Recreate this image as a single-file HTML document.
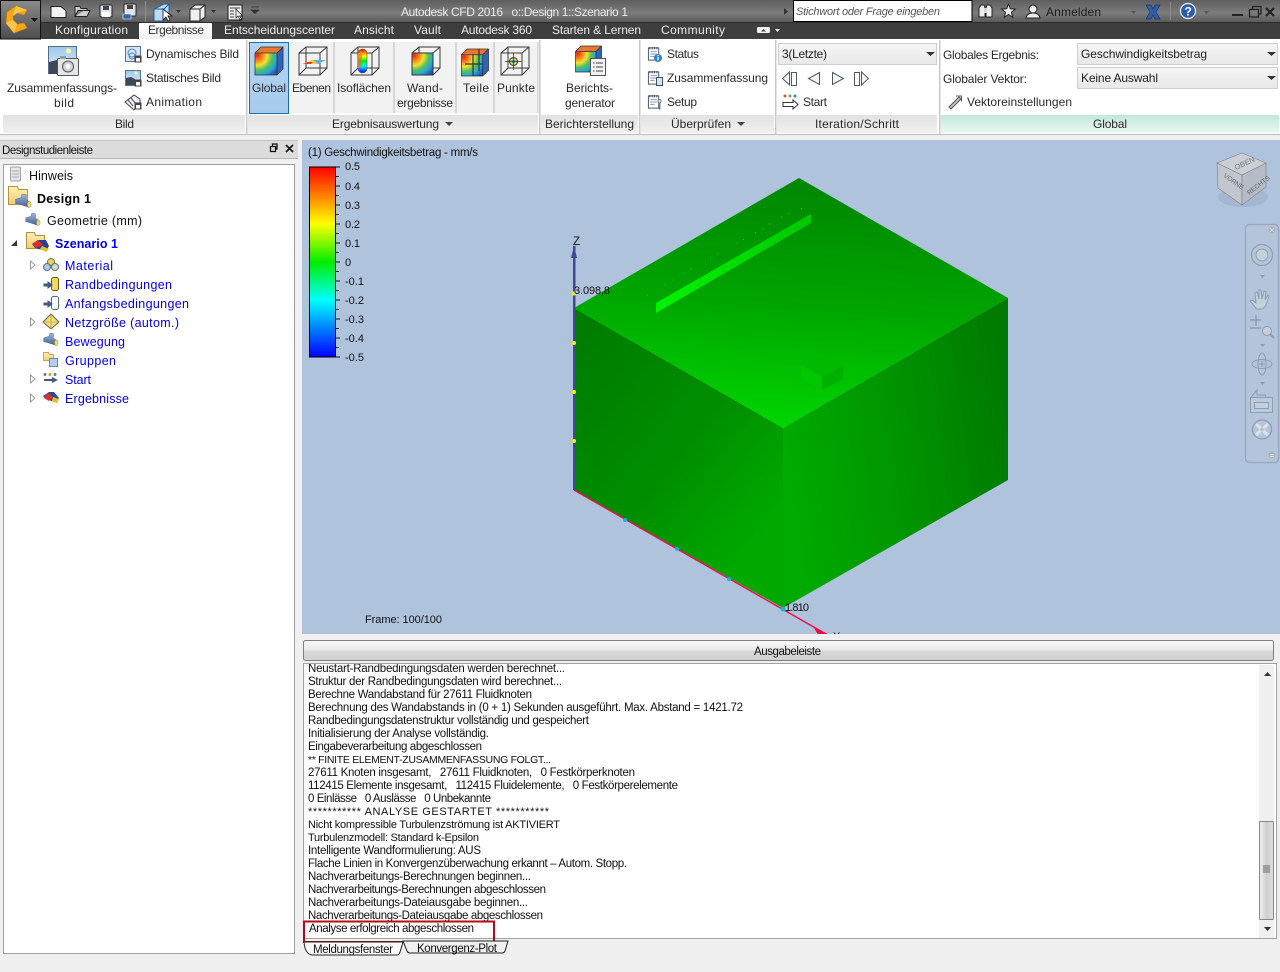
<!DOCTYPE html>
<html><head><meta charset="utf-8"><title>Autodesk CFD 2016</title>
<style>
html,body{margin:0;padding:0;width:1280px;height:972px;overflow:hidden;background:#f0f0f0}
svg{display:block;font-family:"Liberation Sans",sans-serif;font-size:12px}
text{white-space:pre}
</style></head><body>
<svg xmlns="http://www.w3.org/2000/svg" width="1280" height="972" viewBox="0 0 1280 972">
<defs>
<linearGradient id="tb" x1="0" y1="0" x2="0" y2="1"><stop offset="0" stop-color="#5e5e5e"/><stop offset=".55" stop-color="#7c7c7c"/><stop offset="1" stop-color="#585858"/></linearGradient>
<linearGradient id="app" x1="0" y1="0" x2="0" y2="1"><stop offset="0" stop-color="#8a8a8a"/><stop offset=".5" stop-color="#6d6d6d"/><stop offset="1" stop-color="#4c4c4c"/></linearGradient>
<linearGradient id="lab" x1="0" y1="0" x2="0" y2="1"><stop offset="0" stop-color="#e2e2e2"/><stop offset="1" stop-color="#f0f0f0"/></linearGradient>
<linearGradient id="labg" x1="0" y1="0" x2="0" y2="1"><stop offset="0" stop-color="#c4e6da"/><stop offset="1" stop-color="#e8f8f3"/></linearGradient>
<linearGradient id="sel" x1="0" y1="0" x2="0" y2="1"><stop offset="0" stop-color="#b4d4f2"/><stop offset="1" stop-color="#a6cbec"/></linearGradient>
<linearGradient id="tab" x1="0" y1="0" x2="0" y2="1"><stop offset="0" stop-color="#ffffff"/><stop offset="1" stop-color="#f0f0f0"/></linearGradient>
<linearGradient id="combo" x1="0" y1="0" x2="0" y2="1"><stop offset="0" stop-color="#f6f6f6"/><stop offset="1" stop-color="#e8e8e8"/></linearGradient>
<linearGradient id="btn" x1="0" y1="0" x2="0" y2="1"><stop offset="0" stop-color="#fafafa"/><stop offset=".45" stop-color="#eaeaea"/><stop offset=".55" stop-color="#d8d8d8"/><stop offset="1" stop-color="#d0d0d0"/></linearGradient>
<linearGradient id="thumb" x1="0" y1="0" x2="1" y2="0"><stop offset="0" stop-color="#f0f0f0"/><stop offset=".5" stop-color="#cfcfcf"/><stop offset="1" stop-color="#dedede"/></linearGradient>
<linearGradient id="leg" x1="0" y1="0" x2="0" y2="1"><stop offset="0" stop-color="#ff0000"/><stop offset=".3" stop-color="#ffff00"/><stop offset=".5" stop-color="#00ee00"/><stop offset=".7" stop-color="#00ffff"/><stop offset="1" stop-color="#0000ff"/></linearGradient>
<linearGradient id="gtop" gradientUnits="userSpaceOnUse" x1="799" y1="178" x2="783" y2="428"><stop offset="0" stop-color="#008600"/><stop offset=".5" stop-color="#00a400"/><stop offset="1" stop-color="#00d600"/></linearGradient>
<linearGradient id="gleft" gradientUnits="userSpaceOnUse" x1="574" y1="340" x2="783" y2="500"><stop offset="0" stop-color="#007c00"/><stop offset=".6" stop-color="#008f00"/><stop offset="1" stop-color="#00a800"/></linearGradient>
<linearGradient id="gright" gradientUnits="userSpaceOnUse" x1="783" y1="430" x2="1008" y2="400"><stop offset="0" stop-color="#00aa00"/><stop offset=".5" stop-color="#009400"/><stop offset="1" stop-color="#007a00"/></linearGradient>
<linearGradient id="strip" gradientUnits="userSpaceOnUse" x1="656" y1="0" x2="811" y2="0"><stop offset="0" stop-color="#00f400"/><stop offset="1" stop-color="#00c800"/></linearGradient>
<radialGradient id="heat" cx=".1" cy=".1" r="1.150"><stop offset="0" stop-color="#e8241c"/><stop offset=".22" stop-color="#f58a1e"/><stop offset=".4" stop-color="#f4e030"/><stop offset=".6" stop-color="#50c060"/><stop offset=".78" stop-color="#28a8d8"/><stop offset="1" stop-color="#2850b0"/></radialGradient>
<linearGradient id="sky" x1="0" y1="0" x2="0" y2="1"><stop offset="0" stop-color="#9cc8f0"/><stop offset="1" stop-color="#e4f0fa"/></linearGradient>
<linearGradient id="fold" x1="0" y1="0" x2="0" y2="1"><stop offset="0" stop-color="#fff2b8"/><stop offset="1" stop-color="#f0cc70"/></linearGradient>
<linearGradient id="pipe" x1="0" y1="0" x2="0" y2="1"><stop offset="0" stop-color="#9db8e0"/><stop offset="1" stop-color="#45608f"/></linearGradient>
<clipPath id="logclip"><rect x="304" y="664" width="950" height="275"/></clipPath>
<clipPath id="vpclip"><rect x="302" y="140" width="978" height="494"/></clipPath>
<symbol id="hc" viewBox="0 0 28 28" overflow="visible">
<path d="M0 6 22 6 22 28 0 28Z" fill="url(#heat)"/>
<path d="M0 6 6 0 28 0 22 6Z" fill="#e87830"/>
<path d="M22 6 28 0 28 22 22 28Z" fill="#2f62bc"/>
<path d="M0 6 6 0 28 0 28 22 22 28 0 28Z M0 6 22 6 22 28 M22 6 28 0" fill="none" stroke="#333" stroke-width=".8"/>
</symbol>
<symbol id="wc" viewBox="0 0 28 28" overflow="visible">
<path d="M0 6 7 0 28 0 28 21 21 28 0 28Z M0 6 21 6 21 28 M21 6 28 0 M7 0 7 21 0 28 M7 21 28 21" fill="none" stroke="#3a3a3a" stroke-width="1"/>
</symbol>
<symbol id="doc" viewBox="0 0 16 16" overflow="visible">
<rect x="1.500" y="1.500" width="11" height="13" fill="#fff" stroke="#40506a"/>
<path d="M3 0.500V3M5.500 .5V3M8 .5V3M10.500 .5V3" stroke="#40506a"/>
<path d="M3.500 5.500H10.500M3.500 8H10.500M3.500 10.500H8" stroke="#8a94a4"/>
</symbol>
<symbol id="pipeic" viewBox="0 0 18 16" overflow="visible">
<path d="M0 6 7 4 V1 Q9.500 -.5 12 1 V6.500 L17 9.500 L15 15 L2 11 L0 11Z" fill="url(#pipe)" stroke="#51678c" stroke-width=".6"/>
<ellipse cx="15.500" cy="12" rx="2.200" ry="3.500" fill="#f4d66a" stroke="#8c7a30" stroke-width=".5"/>
</symbol>
</defs>

<!-- title bar -->
<rect width="1280" height="23" fill="url(#tb)"/>
<rect y="22" width="1280" height="1" fill="#2c2c2c"/>
<rect y="23" width="1280" height="17" fill="#3e3e3e"/>
<!-- ribbon -->
<rect y="39" width="1280" height="96" fill="#fff"/>
<rect y="135" width="1280" height="5" fill="#efefef"/>
<rect y="134" width="1280" height="1" fill="#bdbdbd"/>

<!-- app button -->
<rect x=".5" y=".5" width="40" height="38.500" fill="url(#app)" stroke="#111"/>
<path d="M27 10 16 6 7 12 6 23 14 33 27 28 24 23 17 24 13 20 13 16 17 13 24 15Z" fill="#f2a71c" stroke="#cf7f10" stroke-width=".6"/>
<path d="M16 6 13 16 17 13 27 10Z M6 23 13 20 17 24 14 33Z" fill="#fbc84a"/>
<path d="M31 18h7l-3.500 4z" fill="#111"/>

<!-- QAT icons -->
<path d="M51 6.500h10l5 4.500v6.500h-15z" fill="#f4f4f4" stroke="#222"/>
<path d="M75 16.500v-10h5l1 2h6v2h-9l-3 6h12l3-6h-6" fill="#cfcfcf" stroke="#222"/>
<rect x="100" y="5" width="12" height="12" rx="1" fill="#dfe4ec" stroke="#222"/><rect x="103" y="6" width="6" height="4" fill="#444"/><rect x="102" y="12" width="8" height="5" fill="#fff"/>
<rect x="124" y="4" width="12" height="12" rx="1" fill="#dfe4ec" stroke="#222"/><rect x="127" y="5" width="6" height="4" fill="#444"/><path d="M123 14h8v5h-8z" fill="#2f64a8" stroke="#fff" stroke-width=".6"/>
<rect x="145" y="1" width="1" height="21" fill="#8e8e8e"/>
<path d="M154 9l10-5h5v12l-6 5h-9z" fill="#bcdcf4" stroke="#245ea0" stroke-width="1"/><path d="M154 9h10l5-5M164 9v12" fill="none" stroke="#245ea0"/>
<path d="M163 9l0 11 3-3 2 4 2-1-2-4h4z" fill="#fff" stroke="#111" stroke-width=".8"/>
<path d="M176 10h5l-2.500 3z" fill="#333"/>
<path d="M190 9l5-4h10v12l-5 4h-10z" fill="#f0f0f0" stroke="#222"/><path d="M190 9h10l5-4M200 9v12" fill="none" stroke="#222"/>
<path d="M211 10h5l-2.500 3z" fill="#333"/>
<rect x="228" y="5" width="14" height="15" fill="#ececec" stroke="#222"/><path d="M230 8h10M230 11h4M230 14h4M230 17h4" stroke="#444"/>
<path d="M236 9v9l2-2 2 4 1.500-1-2-3h3z" fill="#fff" stroke="#111" stroke-width=".7"/>
<path d="M251 7h8M251 10h8l-4 3.500z" fill="#333" stroke="#333" stroke-width=".7"/>

<!-- title -->
<text x="401" y="16" textLength="227" fill="#ececec">Autodesk CFD 2016   o::Design 1::Szenario 1</text>
<path d="M784 8v7l4-3.500z" fill="#333"/>
<rect x="793.500" y=".5" width="178.500" height="21" fill="#fff" stroke="#000"/>
<text x="796" y="15" textLength="144" font-size="11" font-style="italic" fill="#555">Stichwort oder Frage eingeben</text>
<!-- binoculars -->
<path d="M979 8l2-3h3l1 3v9h-6z M986 8l1-3h3l2 3v9h-6z" fill="#eee" stroke="#222"/><rect x="984.500" y="8" width="2" height="5" fill="#ccc"/>
<path d="M1008.500 4l1.800 4.800 5 .3-3.900 3.200 1.300 5-4.200-2.800-4.200 2.800 1.300-5-3.900-3.200 5-.3z" fill="#eee" stroke="#222"/>
<circle cx="1033" cy="9" r="4" fill="#eee" stroke="#222"/><path d="M1026 18q1-5 7-5t7 5z" fill="#eee" stroke="#222"/>
<text x="1046" y="16" textLength="55" fill="#1c1c1c">Anmelden</text>
<path d="M1131 11h5l-2.500 3z" fill="#555"/>
<path d="M1146 5h5l2 4 2-4h5l-4 7 4 7h-5l-2-4-2 4h-5l4-7z" fill="#2f5ea8" stroke="#15356c" stroke-width=".7"/>
<rect x="1170" y="2" width="1" height="18" fill="#8a8a8a"/>
<circle cx="1188" cy="11" r="7.500" fill="#2a5cb0" stroke="#eee" stroke-width="1.200"/><text x="1184.500" y="15.500" font-size="12" font-weight="bold" fill="#fff">?</text>
<path d="M1204 11h5l-2.500 3z" fill="#555"/>
<rect x="1232" y="14" width="11" height="2" fill="#222"/>
<path d="M1249.500 9.500h9v7.500h-9z M1252.500 9.500v-3h8.500v7.500h-2.500" fill="none" stroke="#222" stroke-width="1.300"/>
<path d="M1266 8l8 8M1274 8l-8 8" stroke="#222" stroke-width="2.200"/>

<!-- menu tabs -->
<path d="M139 39v-15q0-1 1-1h71q1 0 1 1v15z" fill="url(#tab)"/>
<g fill="#ededed">
<text x="55" y="34" textLength="73">Konfiguration</text>
<text x="148" y="34" textLength="56" fill="#303030">Ergebnisse</text>
<text x="224" y="34" textLength="111">Entscheidungscenter</text>
<text x="354" y="34" textLength="40">Ansicht</text>
<text x="414" y="34" textLength="27">Vault</text>
<text x="461" y="34" textLength="71">Autodesk 360</text>
<text x="552" y="34" textLength="89">Starten &amp; Lernen</text>
<text x="661" y="34" textLength="64">Community</text>
</g>
<rect x="757" y="27" width="13" height="6" rx="1.500" fill="#f0f0f0"/><path d="M761 31.500h5l-2.500-2.500z" fill="#444"/>
<path d="M775 29h5l-2.500 3z" fill="#eee"/>

<!-- panel labels -->
<rect x="3" y="115" width="242" height="18" fill="url(#lab)"/>
<rect x="248" y="115" width="290" height="18" fill="url(#lab)"/>
<rect x="541" y="115" width="97" height="18" fill="url(#lab)"/>
<rect x="641" y="115" width="133" height="18" fill="url(#lab)"/>
<rect x="777" y="115" width="160" height="18" fill="url(#lab)"/>
<rect x="941" y="115" width="338" height="18" fill="url(#labg)"/>
<g fill="#c9c9c9">
<rect x="246" y="40" width="1.500" height="94"/><rect x="539" y="40" width="1.500" height="94"/><rect x="639" y="40" width="1.500" height="94"/><rect x="775" y="40" width="1.500" height="94"/><rect x="939" y="40" width="1.500" height="94"/>
</g>
<!-- Ergebnisauswertung buttons -->
<rect x="290" y="42" width="43" height="71" fill="#f2f2f2"/><rect x="335" y="42" width="58" height="71" fill="#f2f2f2"/><rect x="395" y="42" width="60" height="71" fill="#f2f2f2"/><rect x="457" y="42" width="36" height="71" fill="#f2f2f2"/><rect x="495" y="42" width="42" height="71" fill="#f2f2f2"/>
<g fill="#d6d6d6"><rect x="333" y="42" width="2" height="71"/><rect x="393" y="42" width="2" height="71"/><rect x="455" y="42" width="2" height="71"/><rect x="493" y="42" width="2" height="71"/><rect x="537" y="42" width="1.500" height="71"/></g>
<rect x="249.500" y="42.500" width="39" height="71" fill="url(#sel)" stroke="#1b6db5"/>

<!-- Ribbon text -->
<g fill="#2a2a2a">
<text x="7" y="92" textLength="110">Zusammenfassungs-</text>
<text x="54" y="107" textLength="20">bild</text>
<text x="146" y="58" textLength="93">Dynamisches Bild</text>
<text x="146" y="82" textLength="75">Statisches Bild</text>
<text x="146" y="106" textLength="56">Animation</text>
<text x="115" y="128" textLength="19">Bild</text>
<text x="252" y="92" textLength="34">Global</text>
<text x="292" y="92" textLength="39">Ebenen</text>
<text x="337" y="92" textLength="54">Isoflächen</text>
<text x="407" y="92" textLength="36">Wand-</text>
<text x="397" y="107" textLength="56">ergebnisse</text>
<text x="463" y="92" textLength="26">Teile</text>
<text x="497" y="92" textLength="38">Punkte</text>
<text x="332" y="128" textLength="107">Ergebnisauswertung</text>
<text x="566" y="92" textLength="47">Berichts-</text>
<text x="565" y="107" textLength="50">generator</text>
<text x="545" y="128" textLength="89">Berichterstellung</text>
<text x="667" y="58" textLength="32">Status</text>
<text x="667" y="82" textLength="101">Zusammenfassung</text>
<text x="667" y="106" textLength="30">Setup</text>
<text x="671" y="128" textLength="60">Überprüfen</text>
<text x="803" y="106" textLength="24">Start</text>
<text x="815" y="128" textLength="84">Iteration/Schritt</text>
<text x="943" y="59" textLength="96">Globales Ergebnis:</text>
<text x="943" y="83" textLength="84">Globaler Vektor:</text>
<text x="967" y="106" textLength="105">Vektoreinstellungen</text>
<text x="1093" y="128" textLength="34">Global</text>
</g>
<path d="M445 122h8l-4 4zM737 122h8l-4 4z" fill="#444"/>

<!-- combos -->
<rect x="778.500" y="43.500" width="158" height="21" fill="url(#combo)" stroke="#cfcfcf"/>
<rect x="1077.500" y="43.500" width="200" height="21" fill="url(#combo)" stroke="#cfcfcf"/>
<rect x="1077.500" y="67.500" width="200" height="21" fill="url(#combo)" stroke="#cfcfcf"/>
<text x="782" y="58" textLength="45" fill="#222">3(Letzte)</text>
<text x="1081" y="58" textLength="126" fill="#222">Geschwindigkeitsbetrag</text>
<text x="1081" y="82" textLength="77" fill="#222">Keine Auswahl</text>
<path d="M926 52h9l-4.500 4zM1267 52h9l-4.500 4zM1267 76h9l-4.500 4z" fill="#333"/>

<!-- Ribbon icons -->
<rect x="48.500" y="46.500" width="28" height="27" fill="url(#sky)" stroke="#5a6d80"/>
<path d="M49 74v-12l8-2 6 3v11z" fill="#3f4658"/>
<circle cx="68.500" cy="51" r="2.500" fill="#fff6a0"/>
<rect x="57.500" y="58.500" width="21" height="17" rx="1" fill="#e4e6e8" stroke="#555"/><circle cx="68" cy="66.500" r="5.500" fill="#cfd4d8" stroke="#555"/><circle cx="68" cy="66.500" r="2.500" fill="#f6f6f6"/>
<rect x="60" y="56" width="6" height="3" fill="#9a9a9a"/>
<rect x="125.500" y="46.500" width="15" height="15" fill="#d8e6f4" stroke="#5b7590"/><circle cx="132" cy="53" r="4" fill="none" stroke="#4d8bc4"/><circle cx="132" cy="56" r="3" fill="none" stroke="#4d8bc4"/>
<rect x="134.500" y="55.500" width="7" height="7" fill="#444"/><rect x="136" y="58" width="4" height="3.500" fill="#fff"/>
<rect x="125.500" y="70.500" width="15" height="15" fill="url(#sky)" stroke="#5b7590"/><path d="M126 85v-7l5-1 4 2v6z" fill="#3f4658"/><circle cx="136" cy="73" r="1.500" fill="#fff6a0"/>
<rect x="134.500" y="79.500" width="7" height="7" fill="#444"/><rect x="136" y="82" width="4" height="3.500" fill="#fff"/>
<path d="M125 102l9-7 6 4v5l-6 6z" fill="#eef0f4" stroke="#444"/><path d="M128 100l5 6M131 98l5 6" stroke="#555"/>
<rect x="134.500" y="102.500" width="7" height="7" fill="#444"/><rect x="136" y="105" width="4" height="3.500" fill="#fff"/>

<use href="#hc" x="255" y="47" width="28" height="28"/>
<use href="#wc" x="299" y="47" width="28" height="28"/>
<path d="M303 64l9-4h14l-8 4z" fill="#f6d040"/><path d="M303 64l5-2h5l-2 2z" fill="#e84020"/><path d="M318 64l-5-4h13z" fill="#58b0e8"/>
<use href="#wc" x="351" y="47" width="28" height="28"/>
<rect x="358" y="49" width="9" height="24" rx="4.500" fill="url(#leg)" stroke="#555" stroke-width=".6"/>
<rect x="358" y="54" width="4" height="14" fill="#e8741c" opacity=".7"/>
<use href="#wc" x="412" y="47" width="28" height="28"/>
<rect x="412" y="53" width="21" height="22" fill="url(#heat)"/>
<rect x="412" y="53" width="21" height="22" fill="none" stroke="#333"/>
<use href="#hc" x="461" y="49" width="28" height="27"/>
<path d="M465 64h18M473 54v22M479 49v22" stroke="#333" stroke-width="1.200" fill="none"/>
<use href="#wc" x="501" y="47" width="28" height="28"/>
<circle cx="513.500" cy="61.500" r="4" fill="#f6d040" stroke="#333"/><circle cx="513.500" cy="61.500" r="1.800" fill="#28a0d8"/><path d="M513.500 53v17M505 61.500h17" stroke="#333" stroke-width=".8"/>
<use href="#hc" x="575" y="46" width="27" height="26"/>
<rect x="590.500" y="58.500" width="15" height="17" fill="#f2f2f2" stroke="#555"/>
<path d="M593 63h1.500M596 63h7M593 67h1.500M596 67h7M593 71h1.500M596 71h7" stroke="#444"/>

<use href="#doc" x="647" y="46" width="15" height="16"/><circle cx="658" cy="58" r="4" fill="#2f80d8"/><rect x="657.400" y="56.800" width="1.300" height="3.500" fill="#fff"/><rect x="657.400" y="55" width="1.300" height="1" fill="#fff"/>
<use href="#doc" x="647" y="70" width="15" height="16"/><rect x="656.500" y="77.500" width="6" height="8" fill="#d8e4f0" stroke="#40506a"/>
<use href="#doc" x="647" y="94" width="15" height="16"/><path d="M658 100a2 2 0 0 1 3 0v2l-1 1v6h-1v-6l-1-1z" fill="#dfe4ec" stroke="#40506a" stroke-width=".7"/>

<!-- iteration controls -->
<g fill="#f6f6f6" stroke="#4c5966">
<path d="M789.500 72v13l-7-6.500z"/><rect x="791.500" y="72.500" width="5" height="13" fill="#fff"/>
<path d="M819.500 72.500v12l-11-6z"/>
<path d="M832.500 72.500v12l11-6z"/>
<rect x="854.500" y="72.500" width="5" height="13" fill="#fff"/><path d="M861.500 72v13l7-6.500z"/>
</g>
<circle cx="785" cy="96" r="1.500" fill="#c65a4a"/><circle cx="790" cy="96" r="1.500" fill="#6aa860"/><circle cx="795" cy="96" r="1.500" fill="#4a7ec6"/>
<path d="M783 102.500h10v-2.500l5 4.500-5 4.500v-2.500h-10z" fill="#fff" stroke="#333"/>
<path d="M949 107l10-10 2 2-10 10z" fill="#c0c4ca" stroke="#555"/><path d="M956 96h5.500v5.500" fill="none" stroke="#555"/>

<!-- left panel -->
<rect x="0" y="140" width="298" height="18" fill="#dcdcdc"/><rect x="0" y="140" width="298" height="1" fill="#c2c2c2"/><rect x="0" y="158" width="298" height="1" fill="#b8b8b8"/>
<text x="2" y="154" textLength="91" font-size="11.500" fill="#111">Designstudienleiste</text>
<path d="M270.500 146.500h5v5h-5z M272.500 146v-2h4.500v5h-1.500" fill="none" stroke="#111" stroke-width="1.300"/>
<path d="M286 145l7 7M293 145l-7 7" stroke="#111" stroke-width="1.600"/>
<rect x="3.500" y="164.500" width="291" height="789" fill="#fff" stroke="#9e9e9e"/>

<!-- tree -->
<rect x="10.500" y="167" width="10" height="14" rx="1" fill="#e4e6ea" stroke="#9da2aa"/><path d="M12 171h7M12 174h7M12 177h7" stroke="#a4a8b0"/>
<path d="M8.500 186.500h9l1 3h9v15h-19z" fill="url(#fold)" stroke="#b8923a"/>
<use href="#pipeic" x="15" y="194" width="17" height="14"/>
<use href="#pipeic" x="25" y="213" width="16" height="13"/>
<path d="M26.500 232.500h8l1 3h9v13h-18z" fill="url(#fold)" stroke="#b8923a"/>
<path d="M32 244l6-4h8l3 6-3 5-11-3z" fill="#28409c"/><path d="M38 240l5 5-7 3-4-4z" fill="#e03020"/><path d="M42 246l7 3-3 3-6-3z" fill="#e8c020"/>
<path d="M11 246h6v-6z" fill="#333"/>
<g fill="none" stroke="#9a9a9a"><path d="M30.500 261v8l4.500-4z"/><path d="M30.500 318v8l4.500-4z"/><path d="M30.500 375v8l4.500-4z"/><path d="M30.500 394v8l4.500-4z"/></g>
<circle cx="51" cy="262" r="3.500" fill="#f0d060" stroke="#6f7c4a"/><circle cx="47" cy="267" r="3.500" fill="#b0c8e4" stroke="#556a8a"/><circle cx="55" cy="267" r="3.500" fill="#d8e0c0" stroke="#556a8a"/>
<rect x="51.500" y="277.500" width="7" height="13" rx="2" fill="#f4d860" stroke="#6a5a20"/><path d="M44 284h4v-2l4 3-4 3v-2h-4z" fill="#3f5a80" stroke="#3f5a80"/>
<rect x="51.500" y="296.500" width="7" height="13" rx="2" fill="#fff" stroke="#5a6878"/><path d="M44 303h4v-2l4 3-4 3v-2h-4z" fill="#3f5a80" stroke="#3f5a80"/>
<path d="M51 314l8 8-8 7-8-7z" fill="#f2dc78" stroke="#6d6540"/><path d="M43 322h16M51 314v15" stroke="#a59540" stroke-width=".6"/>
<use href="#pipeic" x="43" y="333" width="16" height="13"/>
<path d="M43.500 352.500h5l1 2h4v6h-10z" fill="url(#fold)" stroke="#c8a45a"/><rect x="49.500" y="358.500" width="8" height="8" fill="#b4cde6" stroke="#6a87a8"/>
<circle cx="45" cy="374.500" r="1.500" fill="#6b7a88"/><circle cx="50" cy="374.500" r="1.500" fill="#c0a040"/><circle cx="55" cy="374.500" r="1.500" fill="#6b7a88"/>
<path d="M44 379h8v-2l6 3-6 3v-2h-8z" fill="#3f5a80"/>
<path d="M43 396l6-4h5l5 6-2 5-11-4z" fill="#2a48a8"/><path d="M48 393l5 4-4 4-5-3z" fill="#e03020"/><path d="M53 397l6 2-2 4-5-2z" fill="#e8c020"/>
<g font-size="12.500">
<text x="29" y="180" textLength="44" fill="#111">Hinweis</text>
<text x="37" y="203" textLength="54" font-weight="bold" fill="#000">Design 1</text>
<text x="47" y="225" textLength="95" fill="#111">Geometrie (mm)</text>
<text x="55" y="248" textLength="63" font-weight="bold" fill="#0000e8">Szenario 1</text>
<g fill="#0000e8">
<text x="65" y="270" textLength="48">Material</text>
<text x="65" y="289" textLength="107">Randbedingungen</text>
<text x="65" y="308" textLength="124">Anfangsbedingungen</text>
<text x="65" y="327" textLength="114">Netzgröße (autom.)</text>
<text x="65" y="346" textLength="60">Bewegung</text>
<text x="65" y="365" textLength="51">Gruppen</text>
<text x="65" y="384" textLength="26">Start</text>
<text x="65" y="403" textLength="64">Ergebnisse</text>
</g></g>

<!-- viewport -->
<rect x="302" y="140" width="978" height="494" fill="#afc3dd"/>
<text x="308" y="156" textLength="170" font-size="11.500" fill="#111">(1) Geschwindigkeitsbetrag - mm/s</text>
<rect x="309.500" y="167" width="26" height="190" fill="url(#leg)" stroke="#000"/>
<path d="M335 167h5M335 176.500h4M335 186h5M335 195.500h4M335 205h5M335 214.500h4M335 224h5M335 233.500h4M335 243h5M335 252.500h4M335 262h5M335 271.500h4M335 281h5M335 290.500h4M335 300h5M335 309.500h4M335 319h5M335 328.500h4M335 338h5M335 347.500h4M335 357h5" stroke="#111"/>
<g font-size="11" fill="#111">
<text x="345" y="170" textLength="15">0.5</text><text x="345" y="190" textLength="15">0.4</text><text x="345" y="209" textLength="15">0.3</text><text x="345" y="228" textLength="15">0.2</text><text x="345" y="247" textLength="15">0.1</text><text x="345" y="266">0</text>
<text x="345" y="285" textLength="19">-0.1</text><text x="345" y="304" textLength="19">-0.2</text><text x="345" y="323" textLength="19">-0.3</text><text x="345" y="342" textLength="19">-0.4</text><text x="345" y="361" textLength="19">-0.5</text>
</g>

<!-- box -->
<polygon points="574,308 783,428 783,608 574,490" fill="url(#gleft)"/>
<polygon points="783,428 1008,298 1008,480 783,608" fill="url(#gright)"/>
<polygon points="799,178 1008,298 783,428 574,308" fill="url(#gtop)"/>
<polygon points="656,303 811,214 811,223 656,313" fill="url(#strip)"/>
<polygon points="801,365 822,377 822,390 801,378" fill="#00c800"/>
<polygon points="822,377 843,366 843,379 822,390" fill="#00b000"/>
<polygon points="801,365 822,354 843,366 822,377" fill="#00ba00"/>
<path d="M647 295h1M665 285h1M673 280h1M684 273.500h1M691 269h1M710 258h1M717 254h1M736 243h1M743 239.500h1M755 232.500h1M762 229h1M769 224h1M781 217h1M788 213.500h1M801 208.500h1" stroke="#00d800"/>
<g clip-path="url(#vpclip)">
<path d="M574 490L826 634" stroke="#e8104a" stroke-width="1.500"/>
<path d="M814 628l14 6-8 4z" fill="#e8104a"/>
<text x="833" y="640" font-size="11" fill="#111">X</text>
</g>
<rect x="573" y="246" width="2.500" height="244" fill="#45459a"/>
<path d="M571 258l3-12 3 12z" fill="#45459a"/>
<text x="573" y="245" font-size="11.500" fill="#111">Z</text>
<g fill="#ffee00"><circle cx="574" cy="293.500" r="2"/><circle cx="574" cy="343" r="2"/><circle cx="574" cy="392" r="2"/><circle cx="574" cy="441" r="2"/></g>
<g fill="#10b8d8"><circle cx="625" cy="520" r="2"/><circle cx="677" cy="549" r="2"/><circle cx="729" cy="579" r="2"/><circle cx="783" cy="609" r="2.500"/></g>
<text x="574" y="294" textLength="36" font-size="11" fill="#111">3.098,8</text>
<text x="785" y="611" textLength="24" font-size="11" fill="#111">1.810</text>
<text x="365" y="623" textLength="77" font-size="11" fill="#111">Frame: 100/100</text>

<!-- viewcube -->
<ellipse cx="1243" cy="197" rx="25" ry="10" fill="#98a9c0" opacity=".45"/>
<polygon points="1217,163 1242,175 1242,205 1218,188" fill="#c2c7cf" stroke="#7d8186" stroke-width=".6"/>
<polygon points="1242,175 1266,163 1266,187 1242,205" fill="#b6bcc6" stroke="#7d8186" stroke-width=".6"/>
<polygon points="1242,153 1266,163 1242,175 1217,163" fill="#ccd0d6" stroke="#7d8186" stroke-width=".6"/>
<text x="1234" y="167" font-size="7.500" fill="#777" transform="rotate(-25 1242 164)">OBEN</text>
<text x="1221" y="181" font-size="6.500" fill="#666" transform="rotate(35 1229 182)">VORNE</text>
<text x="1244" y="190" font-size="6.500" fill="#666" transform="rotate(-38 1254 185)">RECHTS</text>

<!-- navbar -->
<rect x="1245.500" y="224.500" width="33" height="238" rx="4" fill="#b4c4da" stroke="#9aa9bf" stroke-width="1.500"/>
<circle cx="1272" cy="230" r="3.500" fill="#a8b2c0"/><path d="M1270 228l4 4M1274 228l-4 4" stroke="#d8dee6" stroke-width=".8"/>
<circle cx="1262" cy="255" r="10.500" fill="#b8c5d6" stroke="#8d9db2" stroke-width="1.300"/><circle cx="1262" cy="255" r="6" fill="#c6d0dc" stroke="#8d9db2"/>
<path d="M1260 275h5l-2.500 3zM1260 344h5l-2.500 3zM1260 382h5l-2.500 3z" fill="#8d9db2"/>
<path d="M1256 308l-6-7 2-1 4 3-1-10 2-1 2 7 0-9 2 0 1 9 2-8 2 1-1 8 3-5 1 1-3 9-3 4h-7z" fill="#c6d0dc" stroke="#8d9db2"/>
<path d="M1256 315v11M1250 320h11M1250 328h11" stroke="#8d9db2" stroke-width="1.500"/><circle cx="1267" cy="331" r="4.500" fill="#c6d0dc" stroke="#8d9db2"/><path d="M1270 334l4 4" stroke="#8d9db2" stroke-width="2"/>
<ellipse cx="1262" cy="364" rx="10" ry="4.500" fill="none" stroke="#8d9db2"/><ellipse cx="1262" cy="364" rx="4" ry="11" fill="none" stroke="#8d9db2"/><path d="M1259 364h6M1262 361v6" stroke="#8d9db2"/>
<rect x="1250.500" y="397.500" width="22" height="15" fill="#bccadb" stroke="#8d9db2"/><rect x="1254.500" y="402.500" width="14" height="6" fill="#c6d0dc" stroke="#8d9db2"/><path d="M1251 397l6-7v5l8 0 1 2" fill="none" stroke="#8d9db2"/>
<circle cx="1262" cy="429.500" r="9.500" fill="#b8c5d6" stroke="#8d9db2" stroke-width="1.300"/><path d="M1256 424l12 11M1268 424l-12 11" stroke="#dde3ea" stroke-width="3"/><circle cx="1262" cy="429.500" r="2" fill="#b8c5d6"/>
<circle cx="1272" cy="455" r="3.500" fill="#a8b2c0"/><rect x="1270" y="454" width="4" height="1" fill="#dde3ea"/><rect x="1270" y="456" width="4" height="1" fill="#dde3ea"/>

<!-- output bar -->
<rect x="303.500" y="640.500" width="970" height="20" rx="2" fill="url(#btn)" stroke="#808080"/>
<text x="754" y="655" textLength="67" font-size="11.500" fill="#111">Ausgabeleiste</text>
<rect x="303.500" y="663.500" width="973" height="275" fill="#fff" stroke="#a2a2a2"/>
<rect x="1259" y="665" width="15" height="273" fill="#f0f0f0"/>
<path d="M1264 676h7l-3.500-4z" fill="#333"/><path d="M1264 927h7l-3.500 4z" fill="#333"/>
<rect x="1259.500" y="821.500" width="14" height="98" rx="1" fill="url(#thumb)" stroke="#888"/>
<path d="M1263 866h7M1263 868h7M1263 870h7M1263 872h7" stroke="#666"/>

<g clip-path="url(#logclip)" font-size="11.500" fill="#111">
<text x="308" y="672" textLength="257">Neustart-Randbedingungsdaten werden berechnet...</text>
<text x="308" y="685" textLength="254">Struktur der Randbedingungsdaten wird berechnet...</text>
<text x="308" y="698" textLength="224">Berechne Wandabstand für 27611 Fluidknoten</text>
<text x="308" y="711" textLength="435">Berechnung des Wandabstands in (0 + 1) Sekunden ausgeführt. Max. Abstand = 1421.72</text>
<text x="308" y="724" textLength="281">Randbedingungsdatenstruktur vollständig und gespeichert</text>
<text x="308" y="737" textLength="181">Initialisierung der Analyse vollständig.</text>
<text x="308" y="750" textLength="174">Eingabeverarbeitung abgeschlossen</text>
<text x="308" y="763" textLength="243" font-size="10.500">** FINITE ELEMENT-ZUSAMMENFASSUNG FOLGT...</text>
<text x="308" y="776" textLength="327">27611 Knoten insgesamt,   27611 Fluidknoten,   0 Festkörperknoten</text>
<text x="308" y="789" textLength="370">112415 Elemente insgesamt,   112415 Fluidelemente,   0 Festkörperelemente</text>
<text x="308" y="802" textLength="183">0 Einlässe   0 Auslässe   0 Unbekannte</text>
<text x="308" y="815" textLength="241" font-size="11">*********** ANALYSE GESTARTET ***********</text>
<text x="308" y="828" textLength="252" font-size="11">Nicht kompressible Turbulenzströmung ist AKTIVIERT</text>
<text x="308" y="841" textLength="171" font-size="11">Turbulenzmodell: Standard k-Epsilon</text>
<text x="308" y="854" textLength="173">Intelligente Wandformulierung: AUS</text>
<text x="308" y="867" textLength="319">Flache Linien in Konvergenzüberwachung erkannt – Autom. Stopp.</text>
<text x="308" y="880" textLength="223">Nachverarbeitungs-Berechnungen beginnen...</text>
<text x="308" y="893" textLength="238">Nachverarbeitungs-Berechnungen abgeschlossen</text>
<text x="308" y="906" textLength="220">Nachverarbeitungs-Dateiausgabe beginnen...</text>
<text x="308" y="919" textLength="235">Nachverarbeitungs-Dateiausgabe abgeschlossen</text>
<text x="309" y="932" textLength="165">Analyse erfolgreich abgeschlossen</text>
</g>
<rect x="304" y="921.500" width="190" height="20.500" fill="none" stroke="#b40a14" stroke-width="2"/>

<!-- tabs -->
<path d="M403 941l4 10q1 2 3 2h92q2 0 3-2l3-10z" fill="#f0f0f0" stroke="#222"/>
<path d="M304 942q1 12 8 13h85q2 0 3-3l3-10z" fill="#fdfdfd" stroke="#222"/>
<text x="313" y="953" textLength="80" font-size="11.500" fill="#111">Meldungsfenster</text>
<text x="417" y="952" textLength="80" font-size="11.500" fill="#111">Konvergenz-Plot</text>
</svg>
</body></html>
